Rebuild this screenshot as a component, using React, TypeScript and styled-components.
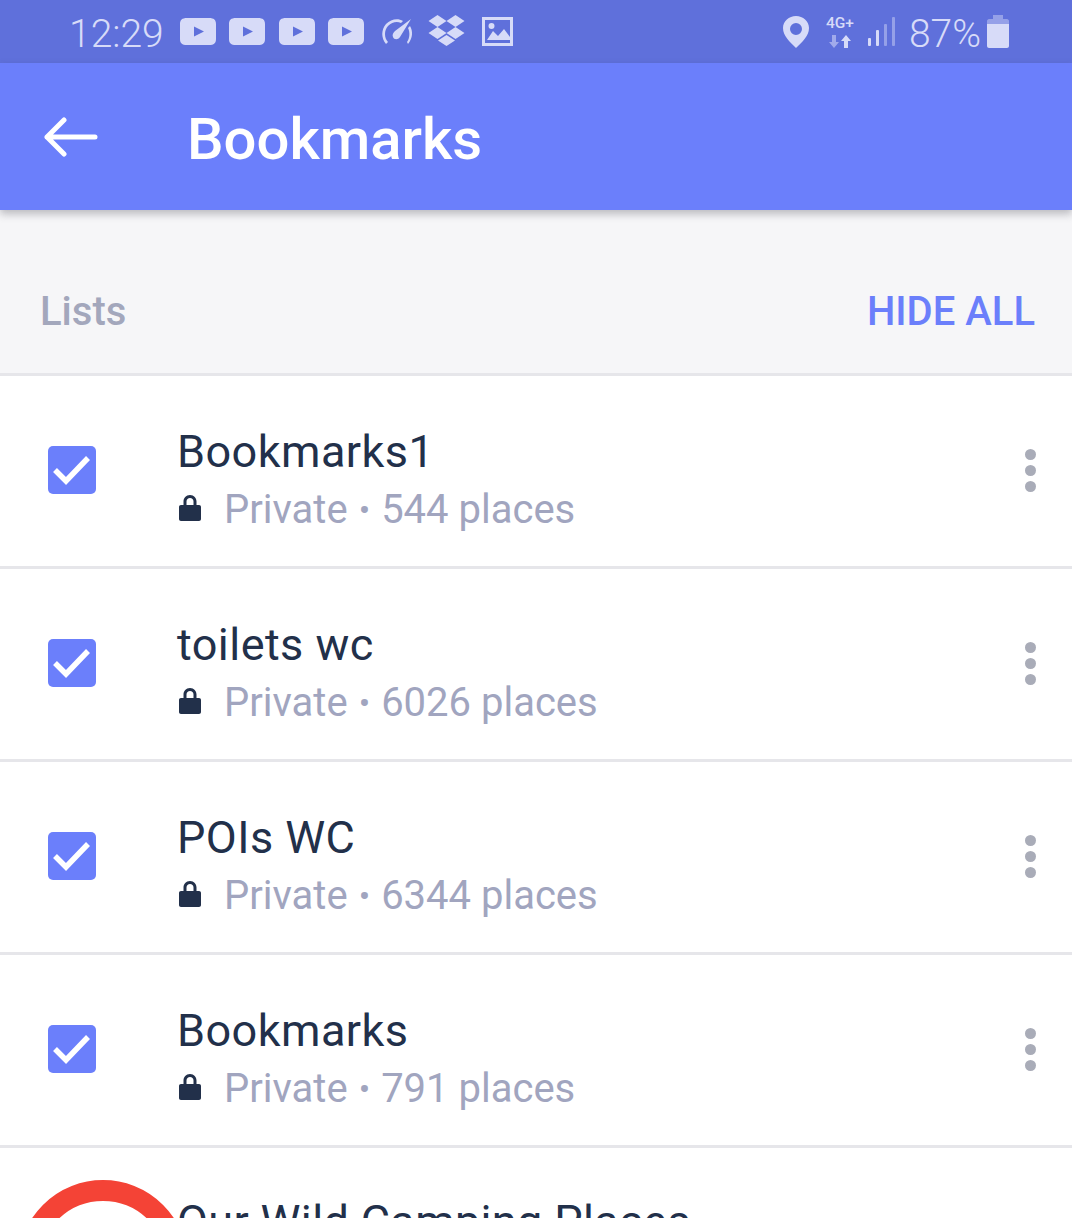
import React from "react";
import styled, { createGlobalStyle } from "styled-components";

const Global = createGlobalStyle`
	html, body {
		margin: 0;
		padding: 0;
		background: #fff;
		overflow: hidden;
	}
	* { box-sizing: border-box; }
`;

const Page = styled.div`
	width: 1072px;
	height: 1218px;
	overflow: hidden;
	font-family: Roboto, "Liberation Sans", sans-serif;
	background: #fff;
`;

const StatusBar = styled.div`
	height: 63px;
	background: #5f70db;
	display: flex;
	align-items: center;
	justify-content: space-between;
	padding: 0 63px 0 69px;
	color: #d7dbf8;
`;

const StatusGroup = styled.div`
	display: flex;
	align-items: center;
`;

const StatusText = styled.span<{ $gap?: number; $after?: number }>`
	font-size: 39px;
	font-weight: 300;
	line-height: 63px;
	padding-top: 5px;
	margin-left: ${(p) => p.$gap ?? 0}px;
	margin-right: ${(p) => p.$after ?? 0}px;
`;

const StatusIcon = styled.svg<{ $gap?: number; $after?: number }>`
	display: block;
	fill: #d7dbf8;
	flex: none;
	margin-left: ${(p) => p.$gap ?? 0}px;
	margin-right: ${(p) => p.$after ?? 0}px;
`;

const AppBar = styled.header`
	position: relative;
	z-index: 1;
	height: 147px;
	background: #6b7ffb;
	display: flex;
	align-items: center;
	padding-left: 44px;
	box-shadow: 0 4px 8px rgba(60, 60, 70, 0.32);
`;

const BackIcon = styled.svg`
	display: block;
	flex: none;
	fill: none;
	stroke: #fff;
	stroke-width: 5;
	stroke-linecap: round;
	stroke-linejoin: round;
`;

const AppTitle = styled.h1`
	margin: 0 0 0 87px;
	color: #fff;
	font-size: 58px;
	font-weight: 500;
	line-height: 1;
	position: relative;
	top: 2px;
`;

const SectionHeader = styled.div`
	height: 166px;
	padding: 39px 37px 0 40px;
	background: #f6f6f8;
	border-bottom: 3px solid #e6e6ea;
	display: flex;
	align-items: center;
	justify-content: space-between;
	font-size: 40px;
	font-weight: 500;
`;

const SectionLabel = styled.span`
	color: #a3a7bc;
`;

const HideAll = styled.span`
	color: #6b7ffb;
`;

const Row = styled.div`
	height: 193px;
	border-bottom: 3px solid #e6e6ea;
	display: flex;
	align-items: center;
	padding: 0 36px 3px 48px;
`;

const Checkbox = styled.div`
	width: 48px;
	height: 48px;
	border-radius: 5px;
	background: #6b7ffb;
	flex: none;
	display: flex;
	align-items: center;
	justify-content: center;
`;

const RowBody = styled.div`
	flex: 1;
	margin-left: 81px;
	padding-top: 19px;
	display: flex;
	flex-direction: column;
	gap: 10px;
`;

const RowTitle = styled.div`
	color: #22304a;
	font-size: 45px;
	line-height: 52px;
	letter-spacing: 0.45px;
`;

const RowMeta = styled.div`
	display: flex;
	align-items: center;
	color: #a1a5bf;
	font-size: 40px;
	line-height: 44px;
`;

const Bullet = styled.span`
	font-size: 34px;
	margin: 0 11px;
`;

const Lock = styled.svg`
	display: block;
	width: 22px;
	height: 26px;
	margin: -4px 23px 0 2px;
	fill: #22304a;
	flex: none;
`;

const Kebab = styled.div`
	display: flex;
	flex-direction: column;
	gap: 5px;
	flex: none;
	margin-top: 1px;
`;

const Dot = styled.span`
	width: 11px;
	height: 11px;
	border-radius: 50%;
	background: #a9acb8;
`;

const PartialRow = styled.div`
	display: flex;
	align-items: flex-start;
	padding: 32px 0 0 18px;
	height: 72px;
`;

const Ring = styled.div`
	width: 170px;
	height: 170px;
	border-radius: 50%;
	border: 21px solid #f44336;
	flex: none;
`;

const PartialTitle = styled(RowTitle)`
	margin: 16px 0 0 -11px;
	letter-spacing: 0.35px;
`;

const lists = [
	{ name: "Bookmarks1", count: "544" },
	{ name: "toilets wc", count: "6026" },
	{ name: "POIs WC", count: "6344" },
	{ name: "Bookmarks", count: "791" },
];

const VideoIcon: React.FC = () => (
	<StatusIcon $after={13.5} width="36" height="27" viewBox="0 0 36 27">
		<path fillRule="evenodd" d="M7 0h22c5 0 7 2 7 6v15c0 4-2 6-7 6H7c-5 0-7-2-7-6V6c0-4 2-6 7-6zM14 8.500v10l10-5z" />
	</StatusIcon>
);

const App: React.FC = () => (
	<Page>
		<Global />
		<StatusBar>
			<StatusGroup>
				<StatusText $after={16}>12:29</StatusText>
				<VideoIcon />
				<VideoIcon />
				<VideoIcon />
				<VideoIcon />
				<StatusIcon $gap={3} width="32" height="28" viewBox="0 0 32 28">
					<path d="M5 26C0 20 0 12 5 6c5-5 12-6 17-3l-2 2C16 3 11 4 7 8 3 12 3 20 7 24zM27 26c5-6 5-13 2-18l-2 2c2 4 2 10-1 14z" />
					<path d="M30 1 19 19c-2 3-6 3-7 0-1-2 0-4 2-6z" />
				</StatusIcon>
				<StatusIcon $gap={15} width="37" height="33" viewBox="0 0 37 33">
					<path d="M9.500 0 18.500 6 9.500 12 0.500 6zM27.500 0 36.500 6 27.500 12 18.500 6zM9.500 12 18.500 18 9.500 24 0.500 18zM27.500 12 36.500 18 27.500 24 18.500 18zM18.500 20 27 25.500 18.500 31 10 25.500z" />
				</StatusIcon>
				<StatusIcon $gap={17} width="31" height="29" viewBox="0 0 31 29">
					<path fillRule="evenodd" d="M0 0h31v29H0zM3 3v23h25V3zM5 23l6-9 5 5 6-7 6 8v3zM9.500 6a3 3 0 1 1 0 6 3 3 0 0 1 0-6z" />
				</StatusIcon>
			</StatusGroup>
			<StatusGroup>
				<StatusIcon width="26" height="32" viewBox="0 0 26 32">
					<path fillRule="evenodd" d="M13 0c7 0 13 5 13 12 0 8-7 14-13 20C7 26 0 20 0 12 0 5 6 0 13 0zm0 7a6 6 0 1 0 0 12 6 6 0 0 0 0-12z" />
				</StatusIcon>
				<StatusIcon $gap={17} width="32" height="33" viewBox="0 0 32 33">
					<text x="0" y="13" fontSize="15.500" fontWeight="500" fontFamily="Roboto, sans-serif">4G+</text>
					<path opacity="0.55" d="M6 20h4v7h3l-5 6-5-6h3z" />
					<path d="M18 33h4v-7h3l-5-6-5 6h3z" />
				</StatusIcon>
				<StatusIcon $gap={10} width="27" height="29" viewBox="0 0 27 29">
					<rect x="0" y="21" width="3" height="8" rx="1" />
					<rect x="8" y="13" width="3" height="16" rx="1" />
					<rect x="16" y="7" width="3" height="22" rx="1" opacity="0.45" />
					<rect x="24" y="0" width="3" height="29" rx="1" opacity="0.45" />
				</StatusIcon>
				<StatusText $gap={14}>87%</StatusText>
				<StatusIcon $gap={6} width="22" height="33" viewBox="0 0 22 33">
					<path opacity="0.45" d="M6 0h10v4h4c1 0 2 1 2 2v3H0V6c0-1 1-2 2-2h4z" />
					<path d="M0 9h22v22c0 1-1 2-2 2H2c-1 0-2-1-2-2z" />
				</StatusIcon>
			</StatusGroup>
		</StatusBar>
		<AppBar>
			<BackIcon width="56" height="40" viewBox="0 0 56 40">
				<path d="M3 20h48M20 3 3 20 20 37" />
			</BackIcon>
			<AppTitle>Bookmarks</AppTitle>
		</AppBar>
		<SectionHeader>
			<SectionLabel>Lists</SectionLabel>
			<HideAll>HIDE ALL</HideAll>
		</SectionHeader>
		{lists.map((list) => (
			<Row key={list.name}>
				<Checkbox>
					<svg width="38" height="30" viewBox="0 0 38 30" fill="none" stroke="#fff" strokeWidth="5.500">
						<path d="M2 15 13 26 35 3" />
					</svg>
				</Checkbox>
				<RowBody>
					<RowTitle>{list.name}</RowTitle>
					<RowMeta>
						<Lock viewBox="0 0 22 26">
							<path fillRule="evenodd" d="M11 0c4 0 6.500 3 6.500 6.500V10H20c1.200 0 2 .8 2 2v12c0 1.200-.8 2-2 2H2c-1.200 0-2-.8-2-2V12c0-1.200.8-2 2-2h2.500V6.500C4.500 3 7 0 11 0zm0 3C9 3 7.500 4.500 7.500 6.500V10h7V6.500C14.500 4.500 13 3 11 3z" />
						</Lock>
						Private<Bullet>•</Bullet>{list.count} places
					</RowMeta>
				</RowBody>
				<Kebab>
					<Dot />
					<Dot />
					<Dot />
				</Kebab>
			</Row>
		))}
		<PartialRow>
			<Ring />
			<PartialTitle>Our Wild Camping Places</PartialTitle>
		</PartialRow>
	</Page>
);

export default App;
